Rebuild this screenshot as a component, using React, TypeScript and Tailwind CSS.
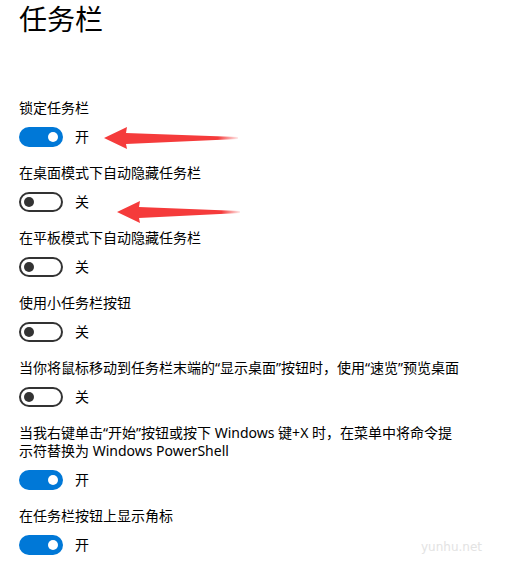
import React from "react";

const font = { fontFamily: '"Noto Sans", "Noto Sans CJK SC", sans-serif' };

type Item = { label: React.ReactNode; on: boolean };

const items: Item[] = [
  { label: "锁定任务栏", on: true },
  { label: "在桌面模式下自动隐藏任务栏", on: false },
  { label: "在平板模式下自动隐藏任务栏", on: false },
  { label: "使用小任务栏按钮", on: false },
  { label: "当你将鼠标移动到任务栏末端的“显示桌面”按钮时，使用“速览”预览桌面", on: false },
  {
    label: (
      <>
        当我右键单击“开始”按钮或按下 Windows 键+X 时，在菜单中将命令提
        <br />
        示符替换为 Windows PowerShell
      </>
    ),
    on: true,
  },
  { label: "在任务栏按钮上显示角标", on: true },
];

function Toggle({ on }: { on: boolean }) {
  if (on) {
    return (
      <span className="flex h-5 w-11 items-center justify-end rounded-full bg-[#0078d7] pr-[5px]">
        <span className="h-[10px] w-[10px] rounded-full bg-white" />
      </span>
    );
  }
  return (
    <span className="flex h-5 w-11 items-center rounded-full border-2 border-[#333] pl-[3px]">
      <span className="h-[10px] w-[10px] rounded-full bg-[#333]" />
    </span>
  );
}

function Arrow({ x, y, len }: { x: number; y: number; len: number }) {
  const id = `g${x}${y}`;
  return (
    <g>
      <defs>
        <linearGradient id={id} x1={x} x2={x + len} y1={0} y2={0} gradientUnits="userSpaceOnUse">
          <stop offset="0" stopColor="#f53b3b" />
          <stop offset="0.85" stopColor="#f53b3b" />
          <stop offset="1" stopColor="#f53b3b" stopOpacity="0.1" />
        </linearGradient>
      </defs>
      <polygon
        fill={`url(#${id})`}
        points={`${x},${y} ${x + 23},${y - 11} ${x + 22},${y - 5} ${x + len},${y - 1} ${x + len},${y + 1} ${x + 22},${y + 6} ${x + 23},${y + 11}`}
      />
    </g>
  );
}

export default function App() {
  return (
    <div className="relative h-[569px] w-[521px] overflow-hidden bg-white pl-[19px] text-black" style={font}>
      <h1 className="pt-[5px] text-[28px] leading-[28px] font-normal">任务栏</h1>
      <div className="mt-[66px] flex flex-col">
        {items.map((it, i) => (
          <div key={i} className="flex flex-col pb-[17px]">
            <div className="text-[14px] leading-[18px]">{it.label}</div>
            <div className="mt-[10px] flex items-center gap-3">
              <Toggle on={it.on} />
              <span className="text-[14px] leading-5">{it.on ? "开" : "关"}</span>
            </div>
          </div>
        ))}
      </div>
      <svg className="pointer-events-none absolute inset-0" width="521" height="569">
        <Arrow x={104} y={138} len={134} />
        <Arrow x={117} y={212} len={123} />
      </svg>
      <span
        className="absolute top-[539px] left-[421px] text-[12px] leading-4 text-[#e3e3e3]"
        style={{ fontFamily: '"DejaVu Sans", sans-serif' }}
      >
        yunhu.net
      </span>
    </div>
  );
}
